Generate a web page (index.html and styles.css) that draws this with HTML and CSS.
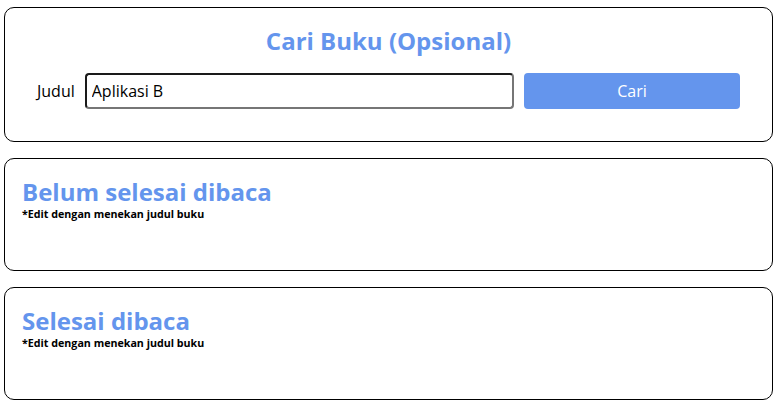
FILE: index.html
```html
<!DOCTYPE html>
<html lang="id">
<head>
<meta charset="utf-8">
<title>Bookshelf</title>
<link rel="stylesheet" href="styles.css">
</head>
<body>
<section class="card search">
  <h2 class="search-title">Cari Buku (Opsional)</h2>
  <form class="search-row">
    <label class="search-label" for="q">Judul</label>
    <input class="search-input" id="q" type="text" value="Aplikasi B">
    <button class="search-btn" type="button">Cari</button>
  </form>
</section>
<section class="card shelf">
  <h2 class="shelf-title">Belum selesai dibaca</h2>
  <p class="shelf-note">*Edit dengan menekan judul buku</p>
</section>
<section class="card shelf">
  <h2 class="shelf-title">Selesai dibaca</h2>
  <p class="shelf-note">*Edit dengan menekan judul buku</p>
</section>
</body>
</html>
```
FILE: styles.css
```css
* { box-sizing: border-box; }
html, body { margin: 0; padding: 0; background: #fff; }
body {
  font-family: "Open Sans", "Noto Sans", sans-serif;
  padding: 7px 4px 0 4px;
  color: #000;
}
.card {
  border: 1px solid #000;
  border-radius: 10px;
  margin-bottom: 16px;
}
.search {
  height: 135px;
  padding: 17px 32px 0 32px;
}
.search-title {
  margin: 0;
  font-size: 24px;
  line-height: 32px;
  font-weight: 700;
  color: #6495ed;
  text-align: center;
}
.search-row {
  margin: 16px 0 0 0;
  display: flex;
  align-items: center;
  gap: 10px;
  height: 36px;
}
.search-label {
  font-size: 16px;
  color: #000;
}
.search-input {
  flex: 1 1 0;
  min-width: 0;
  height: 36px;
  font-family: "Open Sans", sans-serif;
  font-size: 16px;
  padding: 0 5px;
  border: 2px solid;
  border-color: #1a1a1a #767676 #767676 #1a1a1a;
  border-radius: 4px;
  color: #000;
  background: #fff;
}
.search-btn {
  flex: 0 0 216px;
  height: 36px;
  border: none;
  border-radius: 4px;
  background: #6495ed;
  color: #fff;
  font-family: "Open Sans", sans-serif;
  font-size: 16px;
}
.shelf {
  height: 113px;
  padding: 18px 17px 0 17px;
}
.shelf-title {
  margin: 0;
  font-size: 24px;
  line-height: 30px;
  font-weight: 700;
  color: #6495ed;
}
.shelf-note {
  margin: 0;
  font-size: 10.7px;
  line-height: 14px;
  font-weight: 700;
}
```
